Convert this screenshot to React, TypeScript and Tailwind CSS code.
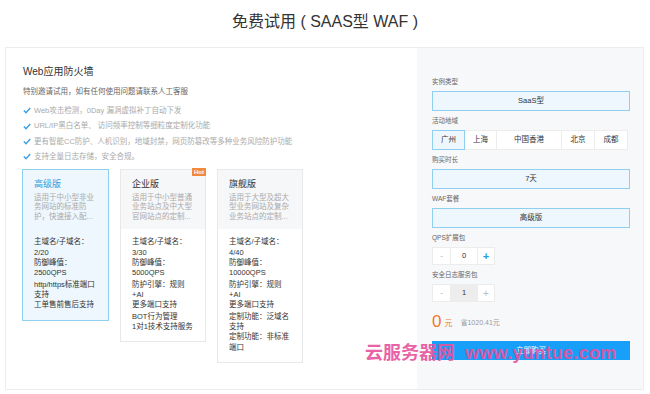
import React from "react";

const checks = [
  "Web攻击检测，0Day 漏洞虚拟补丁自动下发",
  "URL/IP黑白名单、 访问频率控制等细粒度定制化功能",
  "更有智能CC防护、人机识别，地域封禁，网页防篡改等多种业务风险防护功能",
  "支持全量日志存储，安全合规。",
];

type Plan = {
  title: string;
  desc: string[];
  groups: string[][];
  active?: boolean;
  hot?: boolean;
};

const plans: Plan[] = [
  {
    title: "高级版",
    desc: ["适用于中小型非业", "务网站的标准防", "护，快速接入配..."],
    groups: [
      ["主域名/子域名：", "2/20", "防御峰值：", "2500QPS"],
      ["http/https标准端口", "支持", "工单售前售后支持"],
    ],
    active: true,
  },
  {
    title: "企业版",
    desc: ["适用于中小型普通", "业务站点及中大型", "官网站点的定制..."],
    groups: [
      ["主域名/子域名：", "3/30", "防御峰值：", "5000QPS"],
      ["防护引擎：规则", "+AI", "更多端口支持"],
      ["BOT行为管理", "1对1技术支持服务"],
    ],
    hot: true,
  },
  {
    title: "旗舰版",
    desc: ["适用于大型及超大", "型业务网站及复杂", "业务站点的定制..."],
    groups: [
      ["主域名/子域名：", "4/40", "防御峰值：", "10000QPS"],
      ["防护引擎：规则", "+AI", "更多端口支持"],
      ["定制功能：泛域名", "支持", "定制功能：非标准", "端口"],
    ],
  },
];

const regions = [
  { name: "广州", w: "w-[33px]" },
  { name: "上海", w: "w-[32px]" },
  { name: "中国香港", w: "w-[65px]" },
  { name: "北京", w: "w-[33px]" },
  { name: "成都", w: "w-[33px]" },
];

function Check() {
  return (
    <svg width="8" height="7" viewBox="0 0 8 7" className="shrink-0">
      <path d="M0.8 3.6 L3 5.8 L7.2 1" fill="none" stroke="#3a9fe5" strokeWidth="1.4" />
    </svg>
  );
}

function PlanCard({ plan }: { plan: Plan }) {
  return (
    <div
      className={
        "relative border " +
        (plan.active ? "w-[87px] border-[#8fd0f0] bg-[#eef7fd]" : "w-[86px] border-[#e8e8e8] bg-white")
      }
    >
      {plan.hot && (
        <div className="absolute right-[-1px] top-[-2px] h-[8px] px-[2px] bg-[#f08a3c] text-white text-[6px] leading-[8px] font-bold">
          Hot
        </div>
      )}
      <div className={"px-[11px] pt-[8px] pb-[8px] " + (plan.active ? "" : "bg-[#f6f7f9]")}>
        <div className={"text-[9px] leading-[13px] " + (plan.active ? "text-[#2a9de0]" : "text-[#333]")}>
          {plan.title}
        </div>
        <div className="mt-[2px] text-[7.5px] leading-[9.6px] text-[#aaa]">
          {plan.desc.map((d) => (
            <div key={d} className="whitespace-nowrap">
              {d}
            </div>
          ))}
        </div>
      </div>
      <div className="px-[11px] pt-[8px] pb-[9px] text-[7.5px] leading-[10.3px] text-[#333]">
        {plan.groups.map((g, i) => (
          <div key={i} className={i > 0 ? "mt-[1.2px]" : ""}>
            {g.map((l) => (
              <div key={l} className="whitespace-nowrap">
                {l}
              </div>
            ))}
          </div>
        ))}
      </div>
    </div>
  );
}

function Label({ children, h = "h-[19px]" }: { children: React.ReactNode; h?: string }) {
  return <div className={h + " flex items-center text-[6.5px] text-[#666]"}>{children}</div>;
}

function Box({ children }: { children: React.ReactNode }) {
  return (
    <div className="h-[20px] border border-[#8fd0f0] bg-[#eef7fd] flex items-center justify-center text-[7.5px] text-[#333]">
      {children}
    </div>
  );
}

function Stepper({ value, plusBlue, gray }: { value: string; plusBlue?: boolean; gray?: boolean }) {
  return (
    <div className="flex h-[18px]">
      <div className="w-[19px] border border-[#ececec] bg-white flex items-center justify-center text-[8px] text-[#aaa]">
        -
      </div>
      <div
        className={
          "w-[26px] border-y border-[#ececec] flex items-center justify-center text-[7.5px] text-[#333] " +
          (gray ? "bg-[#ededed]" : "bg-white")
        }
      >
        {value}
      </div>
      <div
        className={
          "w-[18px] border border-[#ececec] bg-white flex items-center justify-center " +
          (plusBlue ? "text-[11px] font-bold text-[#2a9de0]" : "text-[10px] text-[#bbb]")
        }
      >
        +
      </div>
    </div>
  );
}

export default function App() {
  return (
    <div className="relative w-[650px] h-[394px] bg-white overflow-hidden font-['Liberation_Sans','Noto_Sans_CJK_SC',sans-serif]">
      <div className="h-[47px] flex items-center justify-center pb-[3px] text-[16px] text-[#333] whitespace-pre">
        免费试用 ( SAAS型 WAF )
      </div>
      <div className="ml-[5px] w-[639px] h-[343px] border border-[#ececec] flex">
        <div className="w-[411px] pl-[16px] pt-[17px]">
          <div className="ml-px text-[10px] leading-[14px] text-[#333]">Web应用防火墙</div>
          <div className="ml-px mt-[7px] text-[7.5px] leading-[12px] text-[#666]">
            特别邀请试用，如有任何使用问题请联系人工客服
          </div>
          <div className="mt-[5px] ml-px">
            {checks.map((c) => (
              <div key={c} className="flex items-center gap-[3px] h-[15.4px] text-[7.5px] text-[#aaa]">
                <Check />
                <span className="whitespace-nowrap">{c}</span>
              </div>
            ))}
          </div>
          <div className="mt-[4px] flex items-start gap-[11px]">
            {plans.map((p) => (
              <PlanCard key={p.title} plan={p} />
            ))}
          </div>
        </div>
        <div className="flex-1 bg-[#f7f8fa] pl-[15px] pr-[13px] pt-[25px]">
          <Label h="h-[18px]">实例类型</Label>
          <Box>SaaS型</Box>
          <Label>活动地域</Label>
          <div className="flex h-[20px]">
            {regions.map((r, i) => (
              <div
                key={r.name}
                className={
                  r.w +
                  " flex items-center justify-center text-[7.5px] text-[#333] border " +
                  (i === 0 ? "border-[#8fd0f0] bg-[#eef7fd]" : "border-[#ececec] bg-white border-l-0")
                }
              >
                {r.name}
              </div>
            ))}
          </div>
          <Label>购买时长</Label>
          <Box>7天</Box>
          <Label>WAF套餐</Label>
          <Box>高级版</Box>
          <Label>QPS扩展包</Label>
          <Stepper value="0" plusBlue />
          <Label>安全日志服务包</Label>
          <Stepper value="1" gray />
          <div className="mt-[7px] h-[26px] flex items-center">
            <span className="text-[17px] text-[#f07a2a]">0</span>
            <span className="ml-[3px] mt-[3px] text-[8px] text-[#f07a2a]">元</span>
            <span className="ml-[8px] mt-[3px] text-[7px] text-[#999]">省1020.41元</span>
          </div>
          <div className="mt-[6px] h-[19px] bg-[#179ffa] flex items-center justify-center text-[7.5px] text-white">
            立即购买
          </div>
        </div>
      </div>
      <div className="absolute left-[365px] top-[343px] flex items-center gap-[10px] text-[18px] leading-[20px] font-bold text-[#e6529c] opacity-90 whitespace-nowrap">
        <span>云服务器网</span>
        <span className="tracking-[0.3px]">www.yuntue.com</span>
      </div>
    </div>
  );
}
